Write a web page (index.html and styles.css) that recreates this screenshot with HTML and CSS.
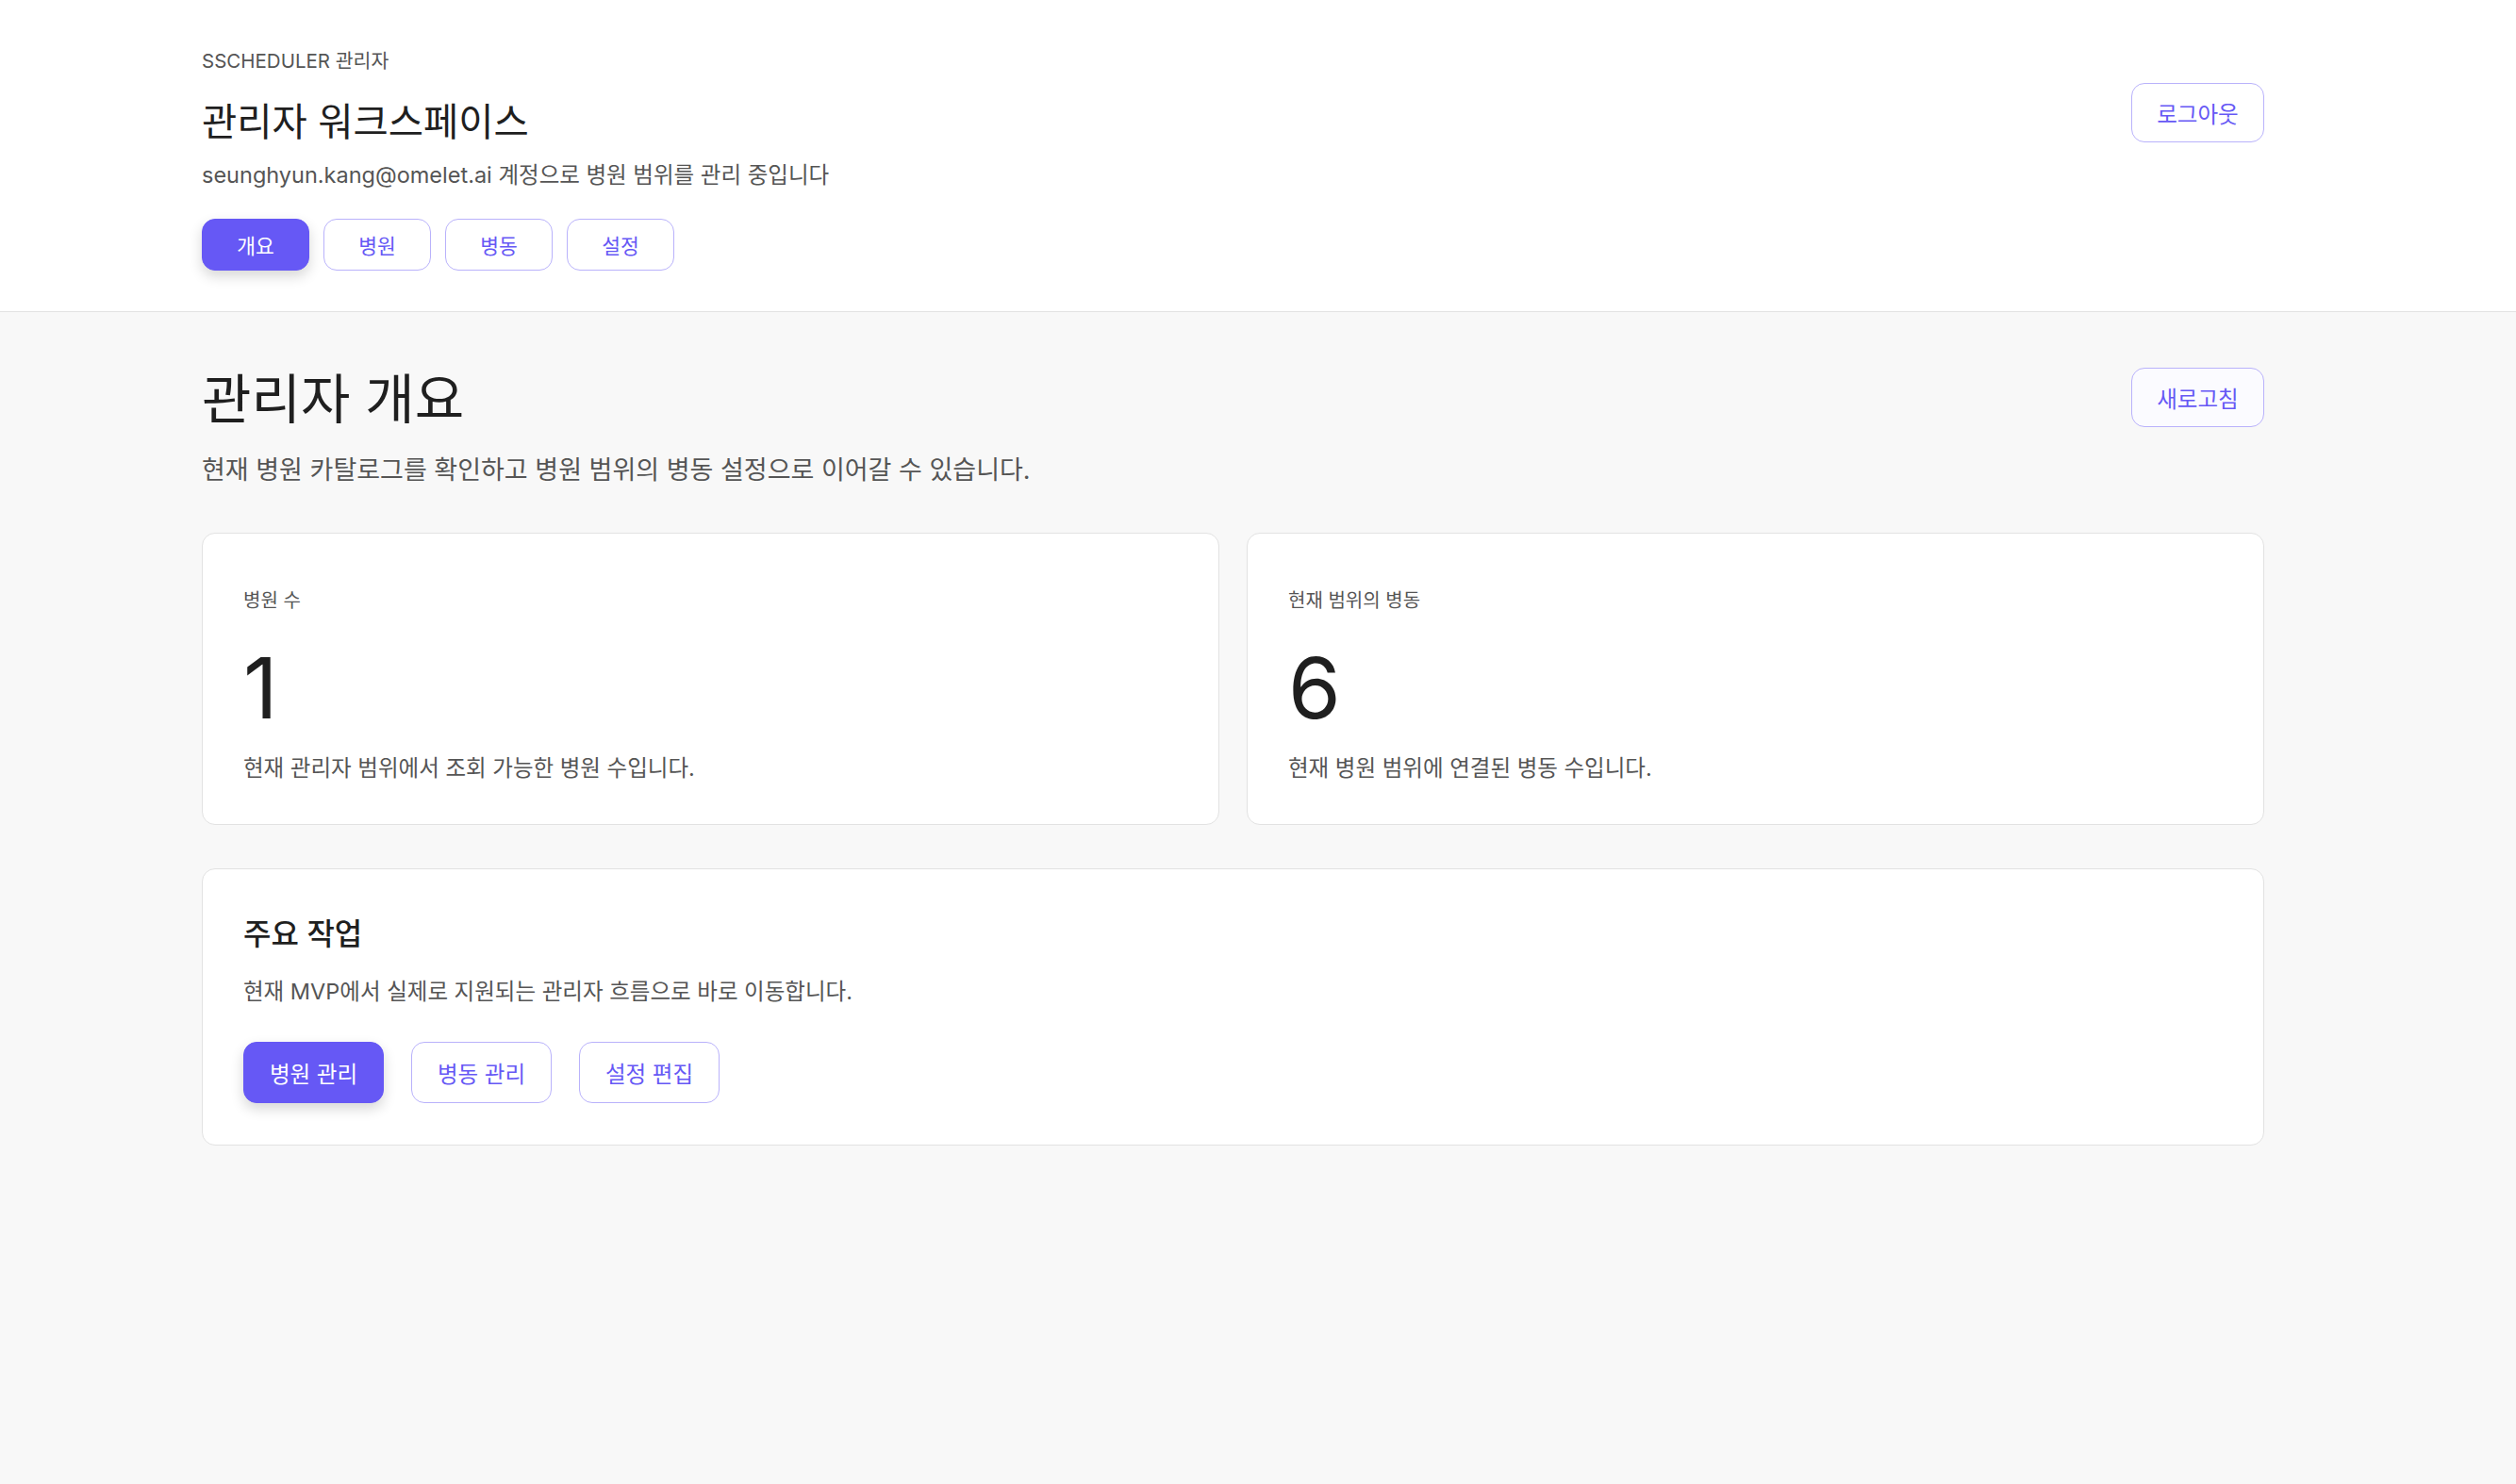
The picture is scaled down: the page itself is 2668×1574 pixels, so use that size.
FILE: index.html
```html
<!DOCTYPE html>
<html lang="ko">
  <head>
    <meta charset="UTF-8" />
    <meta name="viewport" content="width=device-width, initial-scale=1.0" />
    <title>SSCHEDULER 관리자</title>
    <link rel="stylesheet" href="styles.css">
  </head>
  <body>
    <!-- 상단 헤더 -->
    <header class="topbar">
      <div class="wrap topbar-inner">
        <div class="topbar-text">
          <p class="eyebrow">SSCHEDULER 관리자</p>
          <h1 class="workspace-title">관리자 워크스페이스</h1>
          <p class="account">seunghyun.kang@omelet.ai 계정으로 병원 범위를 관리 중입니다</p>
          <nav class="tabs">
            <button class="tab active">개요</button>
            <button class="tab">병원</button>
            <button class="tab">병동</button>
            <button class="tab">설정</button>
          </nav>
        </div>
        <button class="btn-outline">로그아웃</button>
      </div>
    </header>

    <main class="wrap content">
      <div class="page-head">
        <div>
          <h2 class="page-title">관리자 개요</h2>
          <p class="page-desc">현재 병원 카탈로그를 확인하고 병원 범위의 병동 설정으로 이어갈 수 있습니다.</p>
        </div>
        <button class="btn-outline">새로고침</button>
      </div>

      <div class="stats">
        <section class="card stat">
          <p class="stat-label">병원 수</p>
          <p class="stat-value">1</p>
          <p class="stat-desc">현재 관리자 범위에서 조회 가능한 병원 수입니다.</p>
        </section>
        <section class="card stat">
          <p class="stat-label">현재 범위의 병동</p>
          <p class="stat-value">6</p>
          <p class="stat-desc">현재 병원 범위에 연결된 병동 수입니다.</p>
        </section>
      </div>

      <!-- 주요 작업 -->
      <section class="card tasks">
        <h3 class="tasks-title">주요 작업</h3>
        <p class="tasks-desc">현재 MVP에서 실제로 지원되는 관리자 흐름으로 바로 이동합니다.</p>
        <div class="task-actions">
          <button class="action primary">병원 관리</button>
          <button class="action">병동 관리</button>
          <button class="action">설정 편집</button>
        </div>
      </section>
    </main>
  </body>
</html>
```

FILE: styles.css
```css
* {
  box-sizing: border-box;
}

body {
  margin: 0;
  padding: 0;
  font-family: Inter, "Noto Sans CJK KR", sans-serif;
  color: #1f1f1f;
  background: #f8f8f8;
  min-height: 100vh;
}

p,
h1,
h2,
h3 {
  margin: 0;
}

button {
  font-family: inherit;
  cursor: pointer;
}

.wrap {
  padding: 0 267px 0 214px;
}

/* 헤더 */
.topbar {
  background: #fff;
  border-bottom: 1px solid #e3e3e3;
}

.topbar-inner {
  display: flex;
  justify-content: space-between;
  align-items: flex-start;
  padding-top: 50px;
  padding-bottom: 43px;
}

.eyebrow {
  font-size: 20.5px;
  line-height: 30px;
  color: #555;
}

.workspace-title {
  margin-top: 22px;
  font-size: 40.5px;
  line-height: 56px;
  font-weight: 400;
  color: #1f1f1f;
}

.account {
  margin-top: 11px;
  font-size: 23.5px;
  line-height: 33px;
  color: #555;
}

.tabs {
  display: flex;
  gap: 15px;
  margin-top: 30px;
}

.tab {
  width: 114px;
  height: 55px;
  font-size: 21.5px;
  color: #6658f5;
  background: #fff;
  border: 1px solid #b9b2fb;
  border-radius: 14px;
}

.tab.active {
  background: #6658f5;
  border-color: #6658f5;
  color: #fff;
  box-shadow: 0 6px 14px rgba(0, 0, 0, 0.16);
}

.btn-outline {
  margin-top: 38px;
  width: 141px;
  height: 63px;
  font-size: 23.5px;
  color: #6658f5;
  background: #fff;
  border: 1px solid #b9b2fb;
  border-radius: 14px;
}

/* 본문 */
.content {
  padding-top: 59px;
}

.page-head {
  display: flex;
  justify-content: space-between;
  align-items: flex-start;
}

.page-head .btn-outline {
  margin-top: 0;
  background: #fbfbff;
}

.page-title {
  font-size: 57px;
  line-height: 67px;
  font-weight: 400;
  color: #1f1f1f;
}

.page-desc {
  margin-top: 22px;
  font-size: 27px;
  line-height: 40px;
  color: #555;
}

.card {
  background: #fff;
  border: 1px solid #e2e2e2;
  border-radius: 14px;
}

.stats {
  display: grid;
  grid-template-columns: 1fr 1fr;
  gap: 29px;
  margin-top: 46px;
}

.stat {
  height: 310px;
  padding: 56px 43px 0;
}

.stat-label {
  font-size: 20px;
  line-height: 30px;
  color: #555;
}

.stat-value {
  margin-top: 23px;
  font-size: 90px;
  line-height: 110px;
  color: #1f1f1f;
}

.stat-desc {
  margin-top: 13px;
  font-size: 23.5px;
  line-height: 33px;
  color: #555;
}

.tasks {
  margin-top: 46px;
  padding: 48px 43px 44px;
}

.tasks-title {
  font-size: 32px;
  line-height: 42px;
  font-weight: 500;
  color: #1f1f1f;
}

.tasks-desc {
  margin-top: 23px;
  font-size: 23.5px;
  line-height: 33px;
  color: #555;
}

.task-actions {
  display: flex;
  gap: 29px;
  margin-top: 37px;
}

.action {
  width: 149px;
  height: 65px;
  font-size: 23.5px;
  color: #6658f5;
  background: #fff;
  border: 1px solid #b9b2fb;
  border-radius: 14px;
}

.action.primary {
  background: #6658f5;
  border-color: #6658f5;
  color: #fff;
  box-shadow: 0 6px 14px rgba(0, 0, 0, 0.16);
}
```
